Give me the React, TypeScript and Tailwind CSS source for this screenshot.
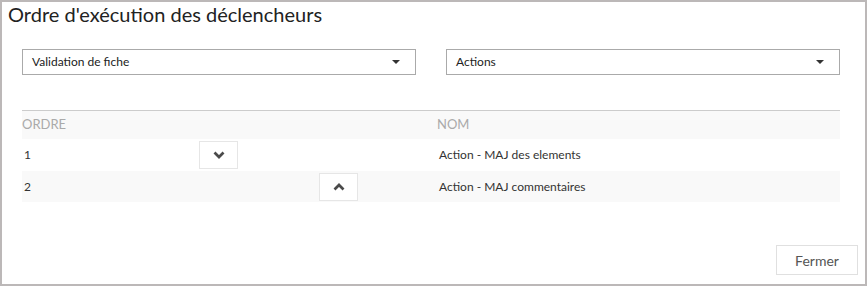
import React from "react";

const rows = [
  { order: "1", name: "Action - MAJ des elements", down: true, up: false },
  { order: "2", name: "Action - MAJ commentaires", down: false, up: true },
];

function Caret() {
  return (
    <svg width="8" height="4" viewBox="0 0 8 4" className="shrink-0">
      <polygon points="0,0 8,0 4,4" fill="#333" />
    </svg>
  );
}

function Chevron({ dir }: { dir: "up" | "down" }) {
  return (
    <svg width="12" height="8" viewBox="0 0 12 8">
      {dir === "down" ? (
        <polyline points="1.5,1.5 6,6 10.5,1.5" fill="none" stroke="#4a4a4a" strokeWidth="2.7" />
      ) : (
        <polyline points="1.5,6.5 6,2 10.5,6.5" fill="none" stroke="#4a4a4a" strokeWidth="2.7" />
      )}
    </svg>
  );
}

function Select({ label }: { label: string }) {
  return (
    <div className="flex h-[26px] w-[394px] items-center justify-between border border-[#aaa] bg-white pl-[9px] pr-[15px] text-[12px] text-[#222]">
      <span>{label}</span>
      <Caret />
    </div>
  );
}

function MoveButton({ dir }: { dir: "up" | "down" }) {
  return (
    <button className="flex h-[28px] w-[39px] items-center justify-center border border-[#e6e6e6] bg-white">
      <Chevron dir={dir} />
    </button>
  );
}

export default function App() {
  return (
    <div
      className="flex h-[286px] w-[867px] flex-col border-2 border-[#bcb8b8] bg-white"
      style={{ fontFamily: "Lato, 'Open Sans', sans-serif" }}
    >
      <h1 className="pl-[6px] text-[20px] leading-[24px] text-[#222]">Ordre d'exécution des déclencheurs</h1>

      <div className="ml-[20px] mt-[23px] flex w-[818px] justify-between">
        <Select label="Validation de fiche" />
        <Select label="Actions" />
      </div>

      <div className="ml-[20px] mt-[35px] w-[818px] border-t border-[#ccc]">
        <div className="flex h-[28px] items-center bg-[#f9f9f9] text-[13px] text-[#aaa]">
          <div className="w-[415px]">ORDRE</div>
          <div>NOM</div>
        </div>
        {rows.map((r, i) => (
          <div
            key={r.order}
            className={`flex items-center text-[12px] text-[#333] ${i % 2 === 1 ? "h-[31px] bg-[#f9f9f9]" : "h-[32px] bg-white"}`}
          >
            <div className="flex w-[415px] items-center">
              <div className="w-[177px] pl-[2px]">{r.order}</div>
              <div className="w-[120px]">{r.down && <MoveButton dir="down" />}</div>
              <div>{r.up && <MoveButton dir="up" />}</div>
            </div>
            <div className="pl-[2px]">{r.name}</div>
          </div>
        ))}
      </div>

      <div className="flex-1" />
      <div className="flex justify-end pb-[9px] pr-[7px]">
        <button className="h-[30px] w-[82px] border border-[#e0e0e0] bg-white text-[14px] text-[#555]">Fermer</button>
      </div>
    </div>
  );
}
